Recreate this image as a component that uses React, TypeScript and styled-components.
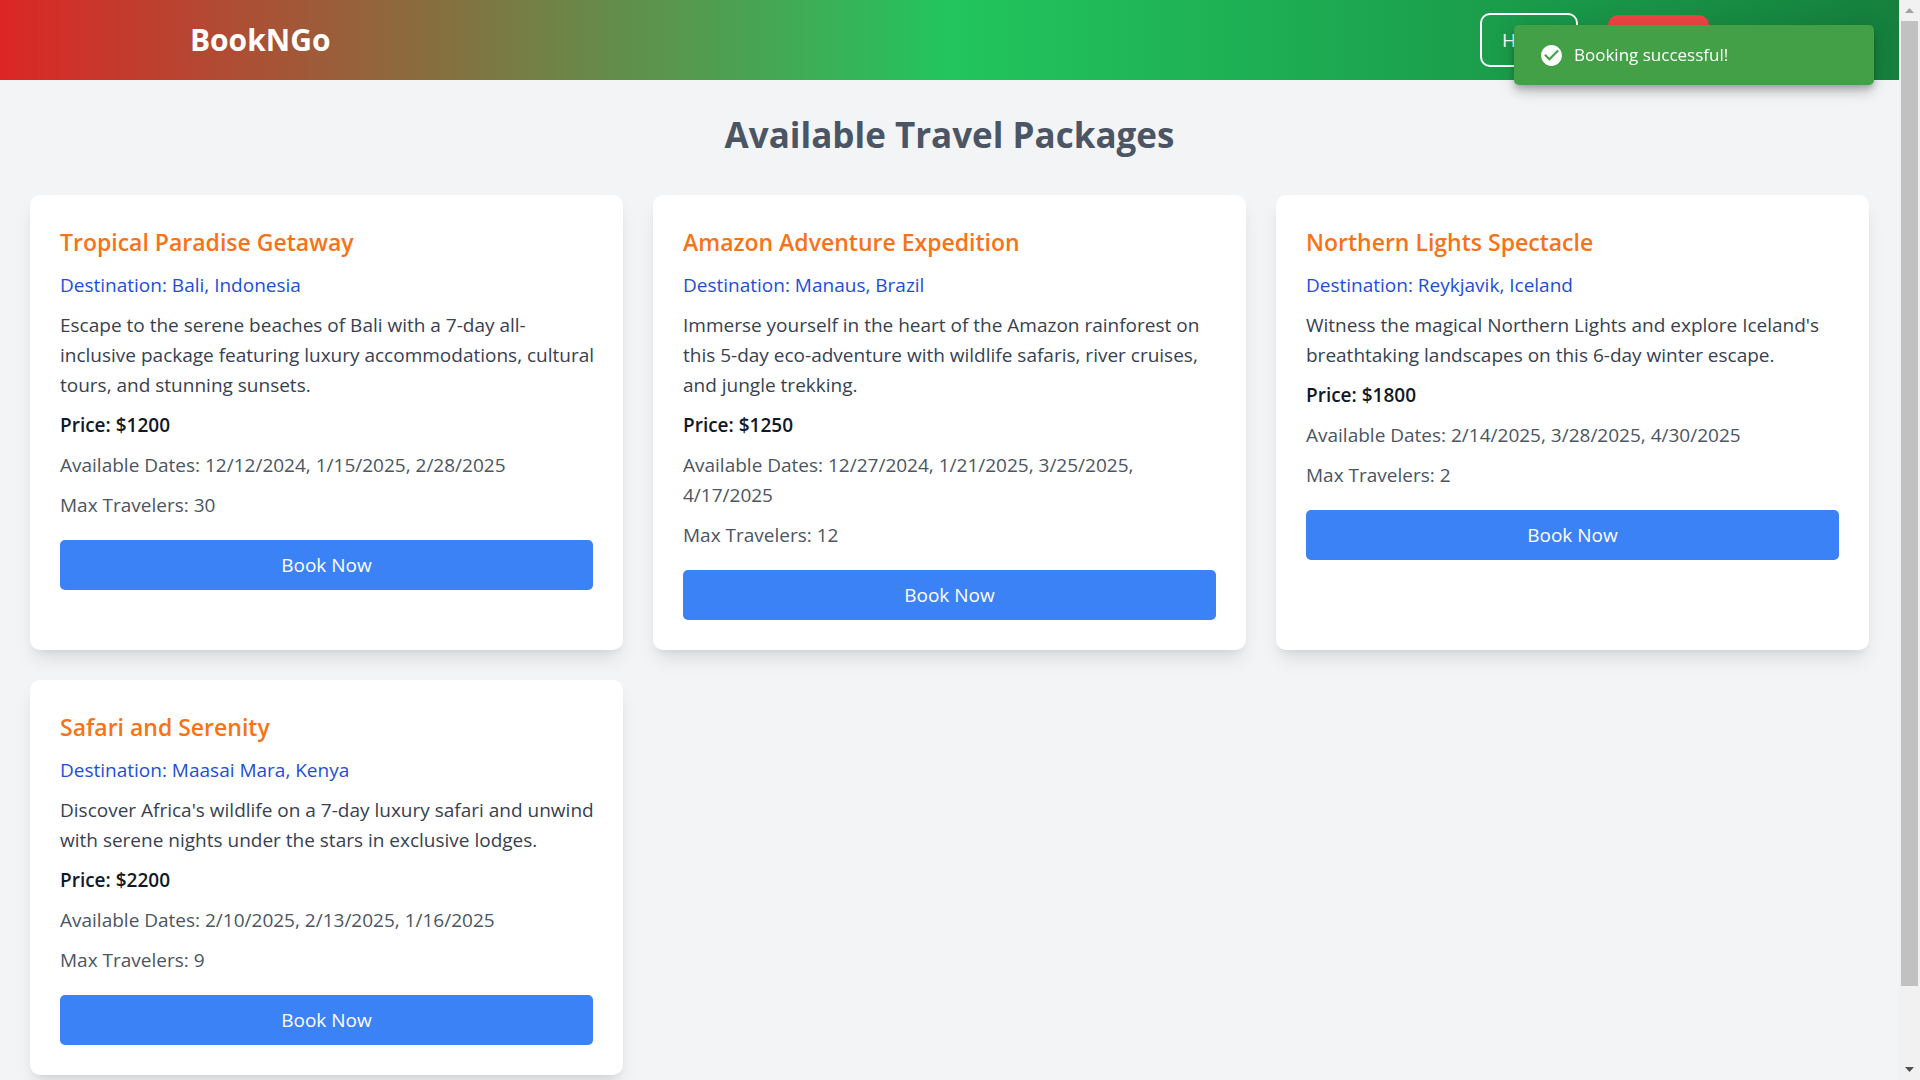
import React from "react";
import styled, { createGlobalStyle } from "styled-components";

const GlobalStyle = createGlobalStyle`
  *, *::before, *::after { box-sizing: border-box; }
  body {
    margin: 0;
    background: #f3f4f6;
    font-family: "Segoe UI", "Open Sans", "Noto Sans", sans-serif;
    font-size: 19px;
    line-height: 30px;
    color: #111827;
  }
  h1, h2, h3, p { margin: 0; }
  button { font: inherit; cursor: pointer; }
`;

const Shell = styled.div`
  display: flex;
  height: 100vh;
  overflow: hidden;
`;

const Page = styled.div`
  flex: 1;
  min-width: 0;
  overflow-y: auto;
  scrollbar-width: none;
`;

const Header = styled.header`
  display: flex;
  align-items: center;
  justify-content: space-between;
  height: 80px;
  padding: 0 10%;
  background: linear-gradient(to right, #dc2626, #22c55e, #15803d);
`;

const Brand = styled.a`
  color: #fff;
  font-size: 30px;
  font-weight: 700;
  line-height: 40px;
  text-decoration: none;
`;

const Nav = styled.nav`
  display: flex;
  align-items: center;
  gap: 30px;
`;

const HomeLink = styled.a`
  padding: 10px 20px;
  border: 2px solid #fff;
  border-radius: 10px;
  color: #fff;
  text-decoration: none;
`;

const LogoutButton = styled.button`
  padding: 10px 20px;
  border: 0;
  border-radius: 10px;
  background: #ef4444;
  color: #fff;
`;

const Main = styled.main`
  padding: 30px;
`;

const PageTitle = styled.h1`
  margin-bottom: 35px;
  color: #4b5563;
  font-size: 35px;
  font-weight: 700;
  line-height: 50px;
  text-align: center;
`;

const PackageGrid = styled.div`
  display: grid;
  grid-template-columns: repeat(3, minmax(0, 1fr));
  gap: 30px;
`;

const Card = styled.article`
  padding: 30px;
  border-radius: 10px;
  background: #fff;
  box-shadow: 0 12px 19px -4px rgba(0, 0, 0, 0.1), 0 5px 8px -5px rgba(0, 0, 0, 0.1);
`;

const CardTitle = styled.h2`
  margin-bottom: 10px;
  color: #f97316;
  font-size: 23px;
  font-weight: 600;
  line-height: 35px;
`;

const Detail = styled.p<{ $color: string; $strong?: boolean }>`
  margin: 0 -5px 10px 0;
  color: ${(p) => p.$color};
  font-weight: ${(p) => (p.$strong ? 600 : 400)};
`;

const BookButton = styled.button`
  width: 100%;
  margin-top: 10px;
  padding: 10px 20px;
  border: 0;
  border-radius: 5px;
  background: #3b82f6;
  color: #fff;
`;

const Toast = styled.div`
  position: fixed;
  top: 25px;
  right: 46px;
  display: flex;
  align-items: center;
  gap: 10px;
  width: 360px;
  height: 60px;
  padding: 0 25px;
  border-radius: 5px;
  background: #43a047;
  color: #fff;
  font-size: 17px;
  box-shadow: 0 4px 6px -1px rgba(0, 0, 0, 0.2), 0 8px 12px 0 rgba(0, 0, 0, 0.14),
    0 1px 22px 0 rgba(0, 0, 0, 0.12);
`;

const Rail = styled.div`
  display: flex;
  flex-direction: column;
  flex: none;
  width: 21px;
  background: #f1f1f1;
`;

const RailArrow = styled.div`
  display: flex;
  align-items: center;
  justify-content: center;
  height: 21px;
`;

const RailTrack = styled.div`
  flex: 1;
  padding: 0 2px;
`;

const RailThumb = styled.div`
  height: 93%;
  background: #c1c1c1;
`;

type TravelPackage = {
  title: string;
  destination: string;
  description: string;
  price: number;
  dates: string[];
  maxTravelers: number;
};

const packages: TravelPackage[] = [
  {
    title: "Tropical Paradise Getaway",
    destination: "Bali, Indonesia",
    description:
      "Escape to the serene beaches of Bali with a 7-day all-inclusive package featuring luxury accommodations, cultural tours, and stunning sunsets.",
    price: 1200,
    dates: ["12/12/2024", "1/15/2025", "2/28/2025"],
    maxTravelers: 30,
  },
  {
    title: "Amazon Adventure Expedition",
    destination: "Manaus, Brazil",
    description:
      "Immerse yourself in the heart of the Amazon rainforest on this 5-day eco-adventure with wildlife safaris, river cruises, and jungle trekking.",
    price: 1250,
    dates: ["12/27/2024", "1/21/2025", "3/25/2025", "4/17/2025"],
    maxTravelers: 12,
  },
  {
    title: "Northern Lights Spectacle",
    destination: "Reykjavik, Iceland",
    description:
      "Witness the magical Northern Lights and explore Iceland's breathtaking landscapes on this 6-day winter escape.",
    price: 1800,
    dates: ["2/14/2025", "3/28/2025", "4/30/2025"],
    maxTravelers: 2,
  },
  {
    title: "Safari and Serenity",
    destination: "Maasai Mara, Kenya",
    description:
      "Discover Africa's wildlife on a 7-day luxury safari and unwind with serene nights under the stars in exclusive lodges.",
    price: 2200,
    dates: ["2/10/2025", "2/13/2025", "1/16/2025"],
    maxTravelers: 9,
  },
];

function PackageCard({ item }: { item: TravelPackage }) {
  return (
    <Card>
      <CardTitle>{item.title}</CardTitle>
      <Detail $color="#1d4ed8">{`Destination: ${item.destination}`}</Detail>
      <Detail $color="#374151">{item.description}</Detail>
      <Detail $color="#111827" $strong>{`Price: $${item.price}`}</Detail>
      <Detail $color="#4b5563">{`Available Dates: ${item.dates.join(", ")}`}</Detail>
      <Detail $color="#4b5563">{`Max Travelers: ${item.maxTravelers}`}</Detail>
      <BookButton type="button">Book Now</BookButton>
    </Card>
  );
}

export default function App() {
  return (
    <>
      <GlobalStyle />
      <Shell>
        <Page>
          <Header>
            <Brand href="#">BookNGo</Brand>
            <Nav>
              <HomeLink href="#">Home</HomeLink>
              <LogoutButton type="button">Logout</LogoutButton>
            </Nav>
          </Header>
          <Main>
            <PageTitle>Available Travel Packages</PageTitle>
            <PackageGrid>
              {packages.map((item) => (
                <PackageCard key={item.title} item={item} />
              ))}
            </PackageGrid>
          </Main>
        </Page>
        <Rail aria-hidden="true">
          <RailArrow>
            <svg width="9" height="5" viewBox="0 0 9 5">
              <path d="M0 5 4.500 0 9 5z" fill="#a3a3a3" />
            </svg>
          </RailArrow>
          <RailTrack>
            <RailThumb />
          </RailTrack>
          <RailArrow>
            <svg width="9" height="5" viewBox="0 0 9 5">
              <path d="M0 0 4.500 5 9 0z" fill="#505050" />
            </svg>
          </RailArrow>
        </Rail>
      </Shell>
      <Toast role="alert">
        <svg width="25" height="25" viewBox="0 0 24 24" fill="currentColor" aria-hidden="true">
          <path d="M12 2C6.500 2 2 6.500 2 12s4.500 10 10 10 10-4.500 10-10S17.500 2 12 2M10 17L5 12L6.410 10.590L10 14.170L17.590 6.580L19 8L10 17Z" />
        </svg>
        Booking successful!
      </Toast>
    </>
  );
}
